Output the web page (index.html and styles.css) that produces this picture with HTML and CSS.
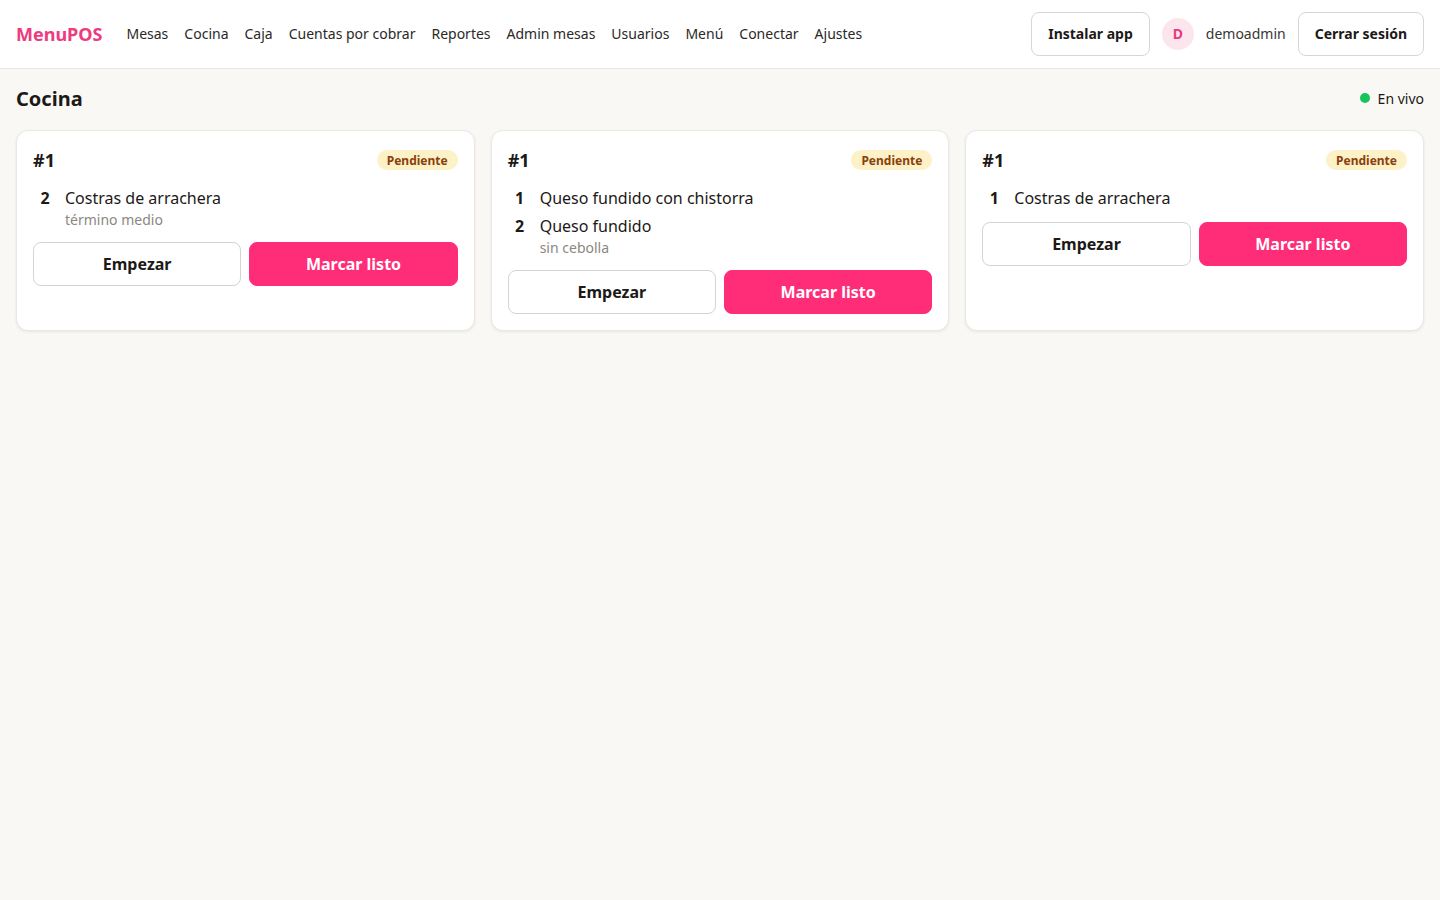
FILE: index.html
```html
<!DOCTYPE html>
<html lang="es">
<head>
<meta charset="utf-8">
<title>MenuPOS · Cocina</title>
<link rel="stylesheet" href="styles.css">
</head>
<body>
<header class="topbar">
  <div class="brand">MenuPOS</div>
  <nav class="nav">
    <a href="#">Mesas</a>
    <a href="#">Cocina</a>
    <a href="#">Caja</a>
    <a href="#">Cuentas por cobrar</a>
    <a href="#">Reportes</a>
    <a href="#">Admin mesas</a>
    <a href="#">Usuarios</a>
    <a href="#">Menú</a>
    <a href="#">Conectar</a>
    <a href="#">Ajustes</a>
  </nav>
  <div class="account">
    <button class="btn-outline">Instalar app</button>
    <span class="avatar">D</span>
    <span class="username">demoadmin</span>
    <button class="btn-outline">Cerrar sesión</button>
  </div>
</header>

<main class="page">
  <div class="page-head">
    <h1 class="page-title">Cocina</h1>
    <div class="live"><span class="live-dot"></span>En vivo</div>
  </div>

  <section class="tickets">
    <article class="ticket">
      <div class="ticket-head">
        <span class="ticket-no">#1</span>
        <span class="badge">Pendiente</span>
      </div>
      <ul class="items">
        <li class="item">
          <span class="qty">2</span>
          <div class="item-body">
            <div class="item-name">Costras de arrachera</div>
            <div class="item-note">término medio</div>
          </div>
        </li>
      </ul>
      <div class="actions">
        <button class="btn-start">Empezar</button>
        <button class="btn-done">Marcar listo</button>
      </div>
    </article>

    <article class="ticket">
      <div class="ticket-head">
        <span class="ticket-no">#1</span>
        <span class="badge">Pendiente</span>
      </div>
      <ul class="items">
        <li class="item">
          <span class="qty">1</span>
          <div class="item-body">
            <div class="item-name">Queso fundido con chistorra</div>
          </div>
        </li>
        <li class="item">
          <span class="qty">2</span>
          <div class="item-body">
            <div class="item-name">Queso fundido</div>
            <div class="item-note">sin cebolla</div>
          </div>
        </li>
      </ul>
      <div class="actions">
        <button class="btn-start">Empezar</button>
        <button class="btn-done">Marcar listo</button>
      </div>
    </article>

    <article class="ticket">
      <div class="ticket-head">
        <span class="ticket-no">#1</span>
        <span class="badge">Pendiente</span>
      </div>
      <ul class="items">
        <li class="item">
          <span class="qty">1</span>
          <div class="item-body">
            <div class="item-name">Costras de arrachera</div>
          </div>
        </li>
      </ul>
      <div class="actions">
        <button class="btn-start">Empezar</button>
        <button class="btn-done">Marcar listo</button>
      </div>
    </article>
  </section>
</main>
</body>
</html>
```

FILE: styles.css
```css
* {
  box-sizing: border-box;
}

html, body {
  margin: 0;
  padding: 0;
}

body {
  font-family: "Noto Sans", "Open Sans", sans-serif;
  color: #1c1917;
  background: #f9f8f5;
  min-height: 100vh;
}

button {
  font-family: inherit;
  cursor: pointer;
}

/* top navigation bar */
.topbar {
  height: 69px;
  display: flex;
  align-items: center;
  padding: 0 16px 1px;
  background: #ffffff;
  border-bottom: 1px solid #e9e6e1;
}

.brand {
  font-size: 18px;
  font-weight: 700;
  color: #ee3b80;
  margin-right: 24px;
}

.nav {
  display: flex;
  gap: 16px;
}

.nav a {
  font-size: 14px;
  color: #2b2926;
  text-decoration: none;
}

.account {
  margin-left: auto;
  display: flex;
  align-items: center;
  gap: 12px;
}

.btn-outline {
  height: 44px;
  padding: 0 16px;
  border: 1px solid #d9d6d1;
  border-radius: 8px;
  background: #ffffff;
  font-size: 14px;
  font-weight: 700;
  color: #1c1917;
}

.avatar {
  width: 32px;
  height: 32px;
  border-radius: 50%;
  background: #fde5ee;
  color: #e83a80;
  font-size: 14px;
  font-weight: 700;
  display: flex;
  align-items: center;
  justify-content: center;
}

.username {
  font-size: 14px;
  color: #3a3733;
}

/* page body */
.page {
  padding: 15px 16px 16px;
}

.page-head {
  display: flex;
  align-items: center;
  justify-content: space-between;
  height: 28px;
  margin-bottom: 18px;
}

.page-title {
  margin: 0;
  font-size: 20px;
  font-weight: 700;
}

.live {
  display: flex;
  align-items: center;
  gap: 8px;
  font-size: 14px;
  color: #1c1917;
}

.live-dot {
  width: 10px;
  height: 10px;
  border-radius: 50%;
  background: #16c45a;
}

/* kitchen tickets */
.tickets {
  display: grid;
  grid-template-columns: repeat(3, 1fr);
  gap: 16px;
}

.ticket {
  background: #ffffff;
  border: 1px solid #ebe8e3;
  border-radius: 12px;
  box-shadow: 0 1px 3px rgba(0, 0, 0, 0.08);
  padding: 16px;
  min-height: 201px;
}

.ticket-head {
  display: flex;
  align-items: center;
  justify-content: space-between;
  height: 26px;
}

.ticket-no {
  font-size: 18px;
  font-weight: 700;
}

.badge {
  height: 20px;
  padding: 0 10px;
  border-radius: 999px;
  background: #fdf1c7;
  color: #8a3f0c;
  font-size: 12px;
  font-weight: 700;
  display: flex;
  align-items: center;
}

.items {
  list-style: none;
  margin: 13px 0 0;
  padding: 0;
  display: flex;
  flex-direction: column;
  gap: 4px;
}

.item {
  display: flex;
  gap: 8px;
}

.qty {
  width: 24px;
  text-align: center;
  font-size: 16px;
  font-weight: 700;
  line-height: 24px;
}

.item-name {
  font-size: 16px;
  line-height: 24px;
}

.item-note {
  font-size: 14px;
  line-height: 20px;
  color: #8b8782;
}

.actions {
  display: grid;
  grid-template-columns: 1fr 1fr;
  gap: 8px;
  margin-top: 12px;
}

.btn-start,
.btn-done {
  height: 44px;
  border-radius: 8px;
  font-size: 16px;
  font-weight: 700;
}

.btn-start {
  background: #ffffff;
  border: 1px solid #d6d3ce;
  color: #1c1917;
}

.btn-done {
  background: #ff2c78;
  border: 1px solid #ff2c78;
  color: #ffffff;
}
```
